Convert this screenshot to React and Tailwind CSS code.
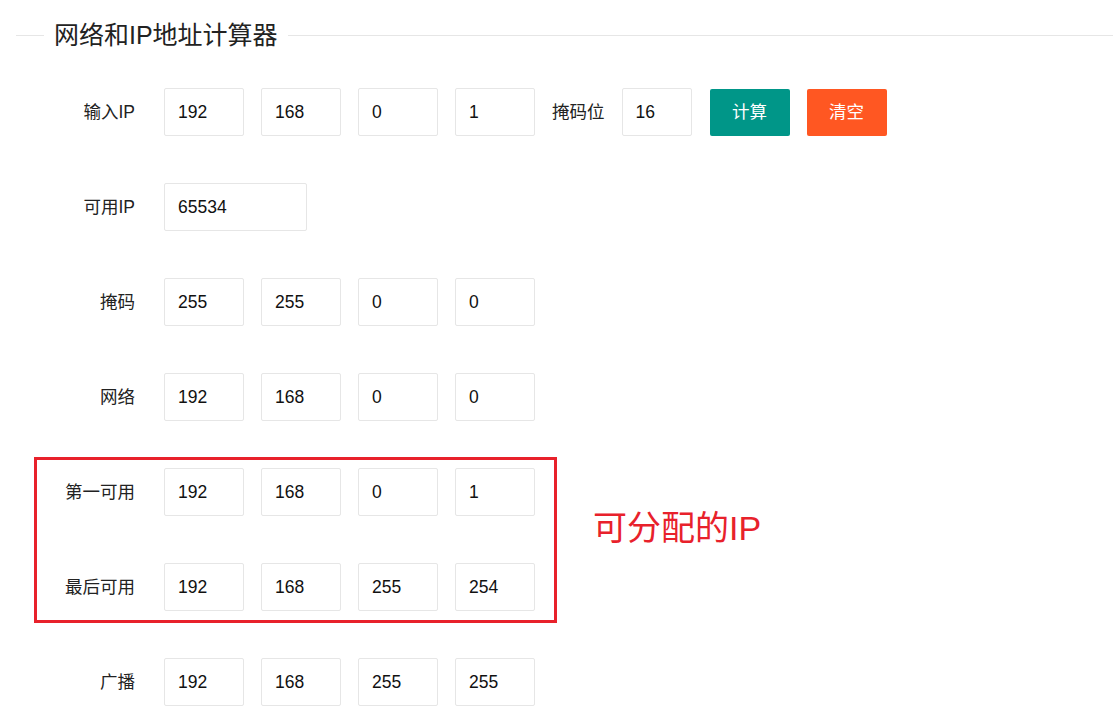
import { useState } from "react";

const rows = [
  { label: "可用IP", wide: "65534" },
  { label: "掩码", values: ["255", "255", "0", "0"] },
  { label: "网络", values: ["192", "168", "0", "0"] },
  { label: "第一可用", values: ["192", "168", "0", "1"] },
  { label: "最后可用", values: ["192", "168", "255", "254"] },
  { label: "广播", values: ["192", "168", "255", "255"] },
];

function Box({ value, className = "w-[80px]" }) {
  return (
    <input
      readOnly
      value={value}
      className={`${className} h-[48px] shrink-0 border border-[#e6e6e6] rounded-[2px] pl-[13px] text-[17.5px] text-[#111] bg-white outline-none`}
    />
  );
}

function Label({ children }) {
  return (
    <div className="w-[136px] shrink-0 text-right pr-[1px] mr-[28px] text-[17.5px] text-[#222]">
      {children}
    </div>
  );
}

export default function App() {
  const [ip] = useState(["192", "168", "0", "1"]);
  const [bits] = useState("16");

  return (
    <div
      className="relative min-h-screen bg-white pt-[20px]"
      style={{ fontFamily: '"Liberation Sans", "Noto Sans CJK SC", sans-serif' }}
    >
      {/* fieldset title */}
      <div className="flex items-center h-[30px] pl-[16px]">
        <div className="w-[28px] h-px bg-[#e6e6e6]" />
        <span className="px-[10px] text-[25px] leading-[30px] text-[#222]">
          网络和IP地址计算器
        </span>
        <div className="flex-1 h-px bg-[#e6e6e6]" />
      </div>

      <div className="flex flex-col gap-[47px] mt-[38px]">
        {/* input row */}
        <div className="flex items-center">
          <Label>输入IP</Label>
          <div className="flex items-center gap-[17px]">
            {ip.map((v, i) => (
              <Box key={i} value={v} />
            ))}
            <span className="text-[17.5px] text-[#222]">掩码位</span>
            <Box value={bits} className="w-[70px]" />
            <button className="w-[80px] h-[47px] ml-[1px] rounded-[2px] bg-[#009688] text-white text-[17.5px]">
              计算
            </button>
            <button className="w-[80px] h-[47px] rounded-[2px] bg-[#ff5722] text-white text-[17.5px]">
              清空
            </button>
          </div>
        </div>

        {rows.map((r) => (
          <div key={r.label} className="flex items-center">
            <Label>{r.label}</Label>
            {r.wide ? (
              <Box value={r.wide} className="w-[143px]" />
            ) : (
              <div className="flex items-center gap-[17px]">
                {r.values.map((v, i) => (
                  <Box key={i} value={v} />
                ))}
              </div>
            )}
          </div>
        ))}
      </div>

      {/* annotation */}
      <div className="absolute left-[34px] top-[457px] w-[523px] h-[166px] border-[3px] border-[#e8212b]" />
      <div className="absolute left-[593px] top-[505px] text-[34px] leading-[46px] text-[#e8212b]">
        可分配的IP
      </div>
    </div>
  );
}
